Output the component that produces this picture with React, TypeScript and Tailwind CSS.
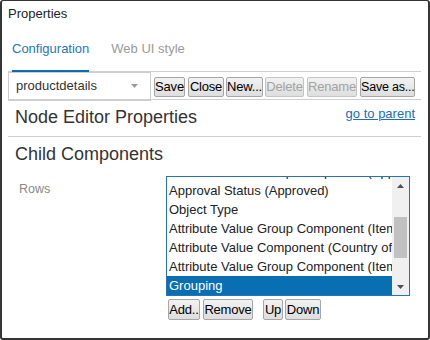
import React from "react";

const rows = [
  "Attribute Value Group Component (Approval",
  "Approval Status (Approved)",
  "Object Type",
  "Attribute Value Group Component (Item",
  "Attribute Value Component (Country of",
  "Attribute Value Group Component (Item",
  "Grouping",
];

function Btn({ label, cls, disabled }: { label: string; cls: string; disabled?: boolean }) {
  return (
    <button
      className={`${cls} block px-0 border rounded-[2px] whitespace-nowrap tracking-[-0.2px] bg-gradient-to-b from-[#f2f2f2] to-[#dedede] ${
        disabled ? "border-[#c4c4c4] text-[#a3a3a3]" : "border-[#a6a6a6] text-black"
      }`}
    >
      {label}
    </button>
  );
}

export default function App() {
  return (
    <div
      className="w-[430px] h-[340px] bg-white border-x-2 border-b-2 border-t border-[#353535] rounded-[3px] pl-[6px] pr-[7px] text-[#333] overflow-hidden"
      style={{ fontFamily: '"Liberation Sans", Arial, sans-serif' }}
    >
      <div className="pt-[5px] text-[13px] leading-[16px] text-[#222]">Properties</div>

      {/* tabs */}
      <div className="flex border-b border-[#cfcfcf]">
        <div className="ml-[4px] pt-[19px] pb-[14px] -mb-px border-b-2 border-[#0b6cb3] text-[13px] leading-[15px] text-[#2478b5]">
          Configuration
        </div>
        <div className="ml-[22px] pt-[19px] pb-[14px] text-[13px] leading-[15px] text-[#9a9a9a]">
          Web UI style
        </div>
      </div>

      {/* toolbar */}
      <div className="flex items-center h-[28px] border-b border-[#cfcfcf]">
        <div className="w-[143px] h-[29px] mt-px border border-[#cdcdcd] flex items-center justify-between pl-[7px] pr-[12px] text-[13px]">
          <span className="text-[#333]">productdetails</span>
          <svg width="7" height="4" viewBox="0 0 7 4">
            <path d="M0 0h7L3.5 4z" fill="#9b9b9b" />
          </svg>
        </div>
        <div className="flex items-start ml-[3px] mt-[2px]">
          <Btn label="Save" cls="w-[31px] h-[20px] text-[13px] leading-[18px]" />
          <Btn label="Close" cls="ml-[3px] w-[36px] h-[20px] text-[13px] leading-[18px]" />
          <Btn label="New..." cls="ml-[2px] w-[37px] h-[20px] text-[13px] leading-[18px]" />
          <Btn label="Delete" cls="ml-[2px] w-[39px] h-[20px] text-[13px] leading-[18px]" disabled />
          <Btn label="Rename" cls="ml-[3px] w-[50px] h-[20px] text-[13px] leading-[18px]" disabled />
          <Btn label="Save as..." cls="ml-[3px] w-[55px] h-[20px] text-[12.5px] leading-[18px]" />
        </div>
      </div>

      {/* node editor heading */}
      <div className="flex items-start justify-between pt-[6px] pb-[8px] border-b border-[#cfcfcf]">
        <div className="ml-[7px] text-[18px] leading-[22px] text-[#333]">Node Editor Properties</div>
        <a className="mr-[6px] text-[13px] leading-[15px] text-[#1a6fb5] underline">go to parent</a>
      </div>

      <div className="pt-[6px] ml-[7px] text-[18px] leading-[22px] text-[#333]">Child Components</div>

      {/* rows */}
      <div className="flex mt-[11px]">
        <div className="w-[158px] pl-[11px] pt-[6px] text-[12.5px] leading-[15px] text-[#8a8a8a]">Rows</div>
        <div>
          <div className="flex w-[244px] h-[120px] border border-[#2673b6] overflow-hidden">
            <div className="flex-1 overflow-hidden">
              <div className="mt-[-15px]">
                {rows.map((r, i) => (
                  <div
                    key={i}
                    className={`h-[19px] pl-[2px] text-[13px] leading-[19px] whitespace-nowrap overflow-hidden ${
                      i === rows.length - 1 ? "bg-[#0a6eb2] text-white" : "text-[#222]"
                    }`}
                  >
                    {r}
                  </div>
                ))}
              </div>
            </div>
            {/* scrollbar */}
            <div className="w-[17px] bg-[#f0f0f0] flex flex-col">
              <div className="h-[17px] flex items-center justify-center">
                <svg width="7" height="4" viewBox="0 0 7 4">
                  <path d="M0 4h7L3.5 0z" fill="#505050" />
                </svg>
              </div>
              <div className="flex-1 pt-[23px]">
                <div className="mx-[2px] h-[41px] bg-[#c1c1c1]" />
              </div>
              <div className="h-[17px] flex items-center justify-center">
                <svg width="7" height="4" viewBox="0 0 7 4">
                  <path d="M0 0h7L3.5 4z" fill="#505050" />
                </svg>
              </div>
            </div>
          </div>
          <div className="flex items-start mt-[3px] ml-[2px]">
            <Btn label="Add.." cls="w-[32px] h-[21px] text-[13px] leading-[19px]" />
            <Btn label="Remove" cls="ml-[3px] w-[50px] h-[21px] text-[13px] leading-[19px]" />
            <Btn label="Up" cls="ml-[10px] w-[20px] h-[21px] text-[13px] leading-[19px]" />
            <Btn label="Down" cls="ml-[2px] w-[36px] h-[21px] text-[13px] leading-[19px]" />
          </div>
        </div>
      </div>
    </div>
  );
}
